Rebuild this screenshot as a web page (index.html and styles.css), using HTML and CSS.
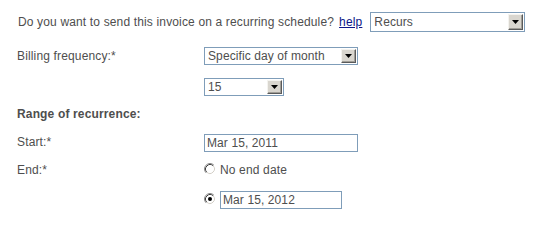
FILE: index.html
```html
<!DOCTYPE html>
<html>
<head>
<meta charset="utf-8">
<link rel="stylesheet" href="styles.css">
</head>
<body>
<form class="form">
  <div class="row row-q">
    <span class="question">Do you want to send this invoice on a recurring schedule?</span>
    <a class="help" href="#">help</a>
    <span class="sel sel-recurs">
      <select><option>Recurs</option></select>
      <span class="btn"><svg width="7" height="4" viewBox="0 0 7 4"><polygon points="0,0 7,0 3.5,4" fill="#000"/></svg></span>
    </span>
  </div>

  <div class="row row-freq">
    <label class="lbl">Billing frequency:*</label>
    <div class="ctl">
      <span class="sel sel-freq">
        <select><option>Specific day of month</option></select>
        <span class="btn"><svg width="7" height="4" viewBox="0 0 7 4"><polygon points="0,0 7,0 3.5,4" fill="#000"/></svg></span>
      </span>
    </div>
  </div>

  <div class="row row-day">
    <span class="lbl"></span>
    <div class="ctl">
      <span class="sel sel-day">
        <select><option>15</option></select>
        <span class="btn"><svg width="7" height="4" viewBox="0 0 7 4"><polygon points="0,0 7,0 3.5,4" fill="#000"/></svg></span>
      </span>
    </div>
  </div>

  <div class="row row-head">
    <span class="heading">Range of recurrence:</span>
  </div>

  <div class="row row-start">
    <label class="lbl">Start:*</label>
    <div class="ctl">
      <input class="txt txt-start" type="text" value="Mar 15, 2011">
    </div>
  </div>

  <div class="row row-end">
    <label class="lbl">End:*</label>
    <div class="ctl">
      <span class="radio"><svg width="12" height="12" viewBox="0 0 12 12"><circle cx="6" cy="6" r="5" fill="#fff"/><path d="M2.11 9.89 A5.5 5.5 0 0 1 9.89 2.11" stroke="#8a8a8a" fill="none"/><path d="M2.82 9.18 A4.5 4.5 0 0 1 9.18 2.82" stroke="#404040" fill="none"/><path d="M9.18 2.82 A4.5 4.5 0 0 1 2.82 9.18" stroke="#d4d0c8" fill="none"/></svg></span>
      <span class="radio-text">No end date</span>
    </div>
  </div>

  <div class="row row-end2">
    <span class="lbl"></span>
    <div class="ctl">
      <span class="radio"><svg width="12" height="12" viewBox="0 0 12 12"><circle cx="6" cy="6" r="5" fill="#fff"/><path d="M2.11 9.89 A5.5 5.5 0 0 1 9.89 2.11" stroke="#8a8a8a" fill="none"/><path d="M2.82 9.18 A4.5 4.5 0 0 1 9.18 2.82" stroke="#404040" fill="none"/><path d="M9.18 2.82 A4.5 4.5 0 0 1 2.82 9.18" stroke="#d4d0c8" fill="none"/><circle cx="6" cy="6" r="2" fill="#000"/></svg></span>
      <input class="txt txt-end" type="text" value="Mar 15, 2012">
    </div>
  </div>
</form>
</body>
</html>
```

FILE: styles.css
```css
html, body {
  margin: 0;
  padding: 0;
  background: #fff;
}

body {
  font-family: "Liberation Sans", Arial, sans-serif;
  font-size: 12px;
  letter-spacing: 0.15px;
  color: #4e4e4e;
}

.form {
  display: flex;
  flex-direction: column;
  padding: 12px 0 0 17px;
  margin: 0;
}

.row {
  display: flex;
  align-items: center;
  height: 18px;
}

.row-q {
  height: 20px;
  padding-left: 1px;
}

.row-freq { margin-top: 15px; }
.row-day { margin-top: 13px; }
.row-head { margin-top: 9px; }
.row-start { margin-top: 11px; }
.row-end { margin-top: 9px; }
.row-end2 { margin-top: 12px; }

.row-start .lbl { margin-top: -3px; }

.help {
  margin-left: 5px;
  color: #0c1688;
  text-decoration: underline;
}

.lbl {
  width: 187px;
  flex: none;
}

.ctl {
  display: flex;
  align-items: center;
}

.heading {
  font-weight: bold;
}

.sel {
  display: inline-flex;
  align-items: stretch;
  box-sizing: border-box;
  border: 1px solid #7f9db9;
  background: #fff;
  height: 18px;
  padding: 1px;
}

.sel-recurs {
  width: 155px;
  height: 20px;
  margin-left: 8px;
}

.sel-freq { width: 154px; }
.sel-day { width: 80px; }

.sel select {
  -webkit-appearance: none;
  appearance: none;
  flex: 1;
  min-width: 0;
  border: 0;
  margin: 0;
  padding: 0 0 0 2px;
  background: transparent;
  font: 12px "Liberation Sans", Arial, sans-serif;
  letter-spacing: 0.1px;
  color: #4e4e4e;
  outline: none;
}

.btn {
  flex: none;
  width: 15px;
  box-sizing: border-box;
  background: #d9d6cf;
  border: 1px solid;
  border-color: #f4f3ef #5a5a5a #5a5a5a #f4f3ef;
  box-shadow: inset -1px -1px 0 #a19e97;
  display: flex;
  align-items: center;
  justify-content: center;
}

.btn svg {
  display: block;
}

.txt {
  box-sizing: border-box;
  height: 18px;
  border: 1px solid #7f9db9;
  margin: 0;
  padding: 0 0 0 2px;
  font: 12px "Liberation Sans", Arial, sans-serif;
  letter-spacing: 0.1px;
  color: #4e4e4e;
  background: #fff;
  outline: none;
}

.txt-start { width: 154px; }
.txt-end { width: 122px; }

.radio {
  display: inline-flex;
  width: 12px;
  height: 12px;
  margin-right: 4px;
  align-self: flex-start;
  margin-top: 2px;
}

.radio svg { display: block; }

.radio-text {
  line-height: 18px;
}
```
